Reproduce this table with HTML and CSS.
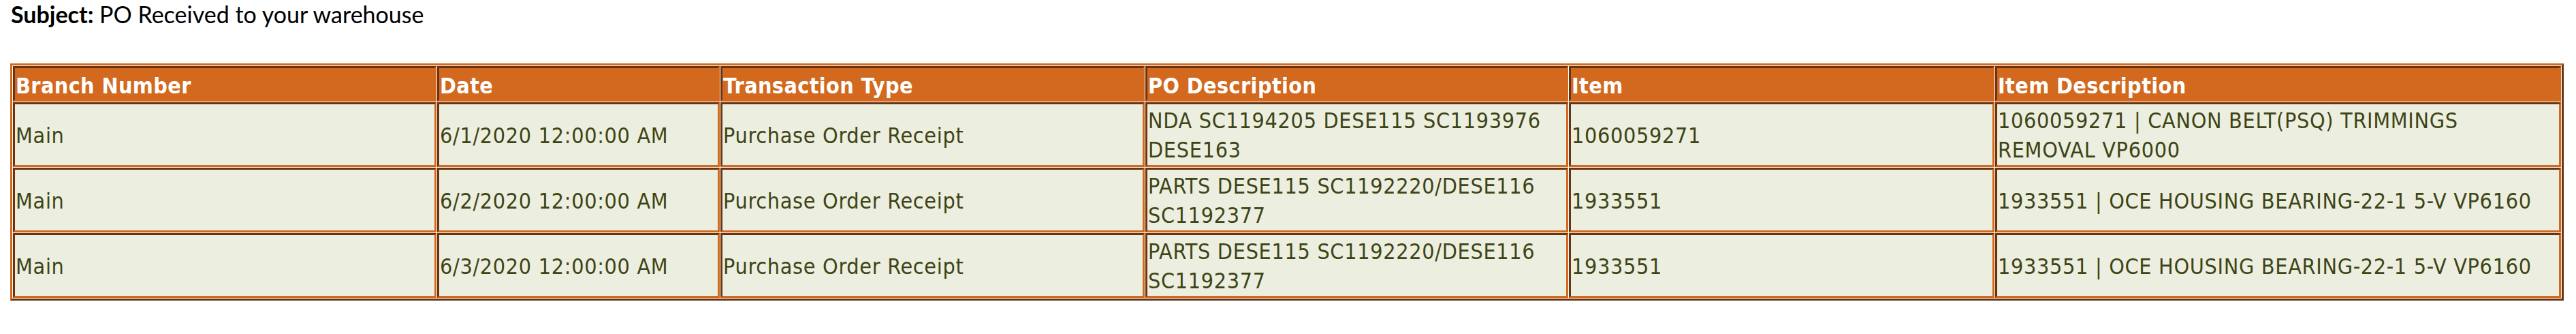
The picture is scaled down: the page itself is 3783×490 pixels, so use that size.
FILE: index.html
```html
<!DOCTYPE html>
<html lang="en">
<head>
<meta charset="utf-8">
<title>PO Received to your warehouse</title>
<link rel="stylesheet" href="styles.css">
</head>
<body>
<p class="subject"><b>Subject:</b> PO Received to your warehouse</p>
<div class="report" role="table">
  <div class="cell head" role="columnheader">Branch Number</div>
  <div class="cell head" role="columnheader">Date</div>
  <div class="cell head" role="columnheader">Transaction Type</div>
  <div class="cell head" role="columnheader">PO Description</div>
  <div class="cell head" role="columnheader">Item</div>
  <div class="cell head" role="columnheader">Item Description</div>

  <div class="cell" role="cell">Main</div>
  <div class="cell" role="cell">6/1/2020 12:00:00 AM</div>
  <div class="cell" role="cell">Purchase Order Receipt</div>
  <div class="cell" role="cell">NDA SC1194205 DESE115 SC1193976 DESE163</div>
  <div class="cell" role="cell">1060059271</div>
  <div class="cell wide" role="cell">1060059271 | CANON BELT(PSQ) TRIMMINGS REMOVAL VP6000</div>

  <div class="cell" role="cell">Main</div>
  <div class="cell" role="cell">6/2/2020 12:00:00 AM</div>
  <div class="cell" role="cell">Purchase Order Receipt</div>
  <div class="cell" role="cell">PARTS DESE115 SC1192220/DESE116 SC1192377</div>
  <div class="cell" role="cell">1933551</div>
  <div class="cell wide" role="cell">1933551 | OCE HOUSING BEARING-22-1 5-V VP6160</div>

  <div class="cell" role="cell">Main</div>
  <div class="cell" role="cell">6/3/2020 12:00:00 AM</div>
  <div class="cell" role="cell">Purchase Order Receipt</div>
  <div class="cell" role="cell">PARTS DESE115 SC1192220/DESE116 SC1192377</div>
  <div class="cell" role="cell">1933551</div>
  <div class="cell wide" role="cell">1933551 | OCE HOUSING BEARING-22-1 5-V VP6160</div>
</div>
</body>
</html>
```
FILE: styles.css
```css
html, body {
  margin: 0;
  padding: 0;
  background: #ffffff;
}

.subject {
  margin: 0;
  padding: 3px 16px 0;
  font-family: Lato, "Liberation Sans", sans-serif;
  font-size: 34px;
  line-height: 36px;
  color: #000000;
}

.subject b {
  font-weight: 700;
}

.report {
  display: grid;
  grid-template-columns: 622px 415px 623px 621px 625px 831px;
  gap: 1px;
  width: max-content;
  margin: 54px 0 0 15px;
  padding: 1px;
  background: #ffffff;
  border: 3px solid;
  border-color: #d2691e #6b3410 #6b3410 #d2691e;
}

.cell {
  box-sizing: border-box;
  height: 95px;
  display: flex;
  align-items: center;
  padding: 3px 2px 0 1px;
  border: 3px solid;
  border-color: #6b3410 #d2691e #d2691e #6b3410;
  background: #eceee0;
  color: #3d4415;
  font-family: "DejaVu Sans Condensed", "DejaVu Sans", sans-serif;
  font-stretch: condensed;
  font-size: 32px;
  line-height: 43px;
  letter-spacing: 0.7px;
}

.wide {
  padding-right: 6px;
}

.head {
  height: 52px;
  align-items: flex-start;
  padding-top: 6px;
  background: #d2691e;
  color: #ffffff;
  font-weight: 700;
  line-height: 40px;
  letter-spacing: 0.4px;
}
```
